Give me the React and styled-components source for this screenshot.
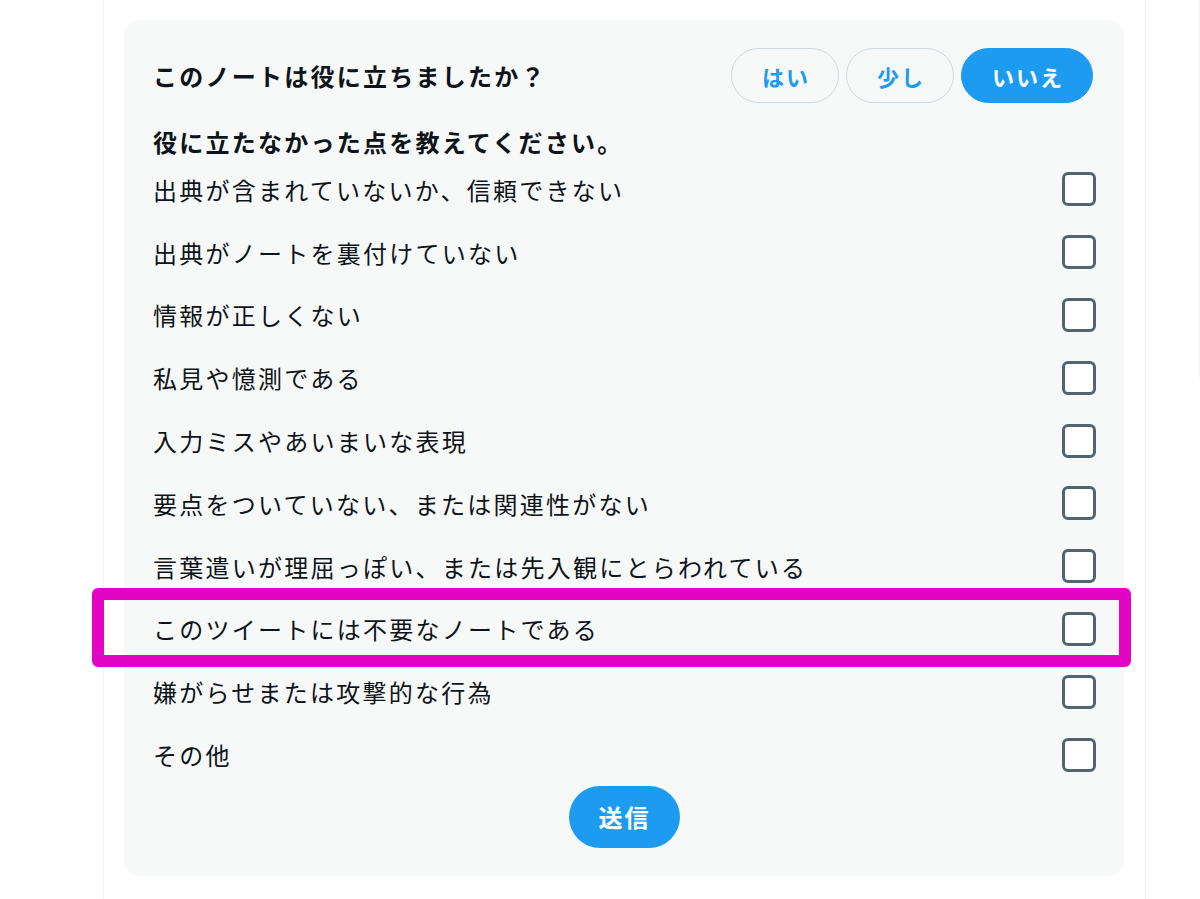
import styled, {createGlobalStyle} from "styled-components";

const GlobalStyle = createGlobalStyle`
  body {
    margin: 0;
    background: #fff;
    font-family: "Noto Sans CJK JP", "Noto Sans", sans-serif;
    color: #0f1419;
  }
`;

const Page = styled.div`
  display: flex;
  padding-left: 103px;
`;

const Column = styled.main`
  box-sizing: border-box;
  width: 1043px;
  min-height: 899px;
  padding: 20px 21px 0 20px;
  border-left: 1px solid #eff3f4;
  border-right: 1px solid #eff3f4;
`;

const Sidebar = styled.aside`
  margin-left: 53px;
  height: 378px;
  border-left: 1px solid #f4f4f4;
`;

const Card = styled.section`
  background: #f7f9f9;
  border-radius: 16px;
  padding: 28px 28px 28px 29px;
`;

const Header = styled.div`
  display: flex;
  justify-content: space-between;
  align-items: center;
  padding-right: 3px;
`;

const Title = styled.h2`
  margin: 0;
  font-size: 24px;
  letter-spacing: 2.25px;
  font-weight: 700;
`;

const Choices = styled.div`
  display: flex;
  gap: 7px;
`;

const Choice = styled.button`
  height: 55px;
  padding: 0 28px 0 30px;
  border-radius: 999px;
  border: 1px solid ${p => (p.$active ? "#1d9bf0" : "#cfd9de")};
  background: ${p => (p.$active ? "#1d9bf0" : "transparent")};
  color: ${p => (p.$active ? "#fff" : "#1d9bf0")};
  font-family: inherit;
  font-size: 22px;
  font-weight: 700;
  letter-spacing: 2px;
`;

const Subtitle = styled.h3`
  margin: 23px 0 0;
  height: 32px;
  line-height: 32px;
  font-size: 24px;
  letter-spacing: 2.25px;
  font-weight: 700;
`;

const Reasons = styled.ul`
  list-style: none;
  margin: 0;
  padding: 0;
`;

const Reason = styled.li`
  position: relative;
  display: flex;
  justify-content: space-between;
  align-items: center;
  height: 62.8px;
  font-size: 24px;
  letter-spacing: 2.25px;
`;

const Box = styled.span`
  box-sizing: border-box;
  width: 34px;
  height: 34px;
  border: 3px solid #536471;
  border-radius: 6px;
  background: #fff;
`;

const Highlight = styled.span`
  position: absolute;
  top: -10px;
  bottom: -7px;
  left: -61px;
  right: -35px;
  border: 12px solid #e305c4;
  border-radius: 6px;
  pointer-events: none;
`;

const Footer = styled.div`
  display: flex;
  justify-content: center;
`;

const SubmitButton = styled.button`
  width: 111px;
  height: 62px;
  border: none;
  border-radius: 999px;
  background: #1d9bf0;
  color: #fff;
  font-family: inherit;
  font-size: 24px;
  font-weight: 700;
  letter-spacing: 2px;
`;

const reasons = [
    "出典が含まれていないか、信頼できない",
    "出典がノートを裏付けていない",
    "情報が正しくない",
    "私見や憶測である",
    "入力ミスやあいまいな表現",
    "要点をついていない、または関連性がない",
    "言葉遣いが理屈っぽい、または先入観にとらわれている",
    "このツイートには不要なノートである",
    "嫌がらせまたは攻撃的な行為",
    "その他",
];

function App() {
    return (
        <Page>
            <GlobalStyle/>
            <Column>
                <Card>
                    <Header>
                        <Title>このノートは役に立ちましたか？</Title>
                        <Choices>
                            <Choice>はい</Choice>
                            <Choice>少し</Choice>
                            <Choice $active>いいえ</Choice>
                        </Choices>
                    </Header>
                    <Subtitle>役に立たなかった点を教えてください。</Subtitle>
                    <Reasons>
                        {reasons.map((text, i) => (
                            <Reason key={text}>
                                {text}
                                <Box/>
                                {i === 7 && <Highlight/>}
                            </Reason>
                        ))}
                    </Reasons>
                    <Footer>
                        <SubmitButton>送信</SubmitButton>
                    </Footer>
                </Card>
            </Column>
            <Sidebar/>
        </Page>
    );
}

export default App;
